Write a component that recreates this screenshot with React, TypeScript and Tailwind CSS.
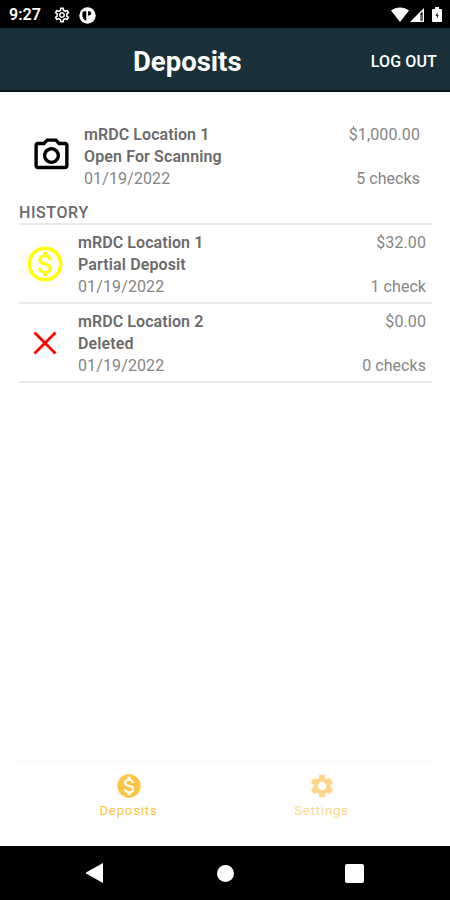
import { ReactNode } from 'react';
import { MdMonetizationOn, MdOutlineMonetizationOn, MdOutlinePhotoCamera, MdOutlineSettings, MdSettings } from 'react-icons/md';

type Deposit = {
  location: string;
  status: string;
  date: string;
  amount: string;
  checks: string;
};

const open: Deposit = {
  location: 'mRDC Location 1',
  status: 'Open For Scanning',
  date: '01/19/2022',
  amount: '$1,000.00',
  checks: '5 checks',
};

const partial: Deposit = {
  location: 'mRDC Location 1',
  status: 'Partial Deposit',
  date: '01/19/2022',
  amount: '$32.00',
  checks: '1 check',
};

const deleted: Deposit = {
  location: 'mRDC Location 2',
  status: 'Deleted',
  date: '01/19/2022',
  amount: '$0.00',
  checks: '0 checks',
};

function DepositRow({ deposit, icon }: { deposit: Deposit; icon: ReactNode }) {
  return (
    <div className="flex h-[66px] items-center text-[16px] leading-[22px] text-[#858585]">
      <div className="flex w-[52px] shrink-0 items-center justify-center pb-[2px]">{icon}</div>
      <div className="ml-[7px] flex-1 whitespace-nowrap">
        <p className="font-semibold tracking-[0.08px] text-[#6b6b6b]">{deposit.location}</p>
        <p className="font-semibold tracking-[0.12px] text-[#6b6b6b]">{deposit.status}</p>
        <p className="tracking-[0.12px]">{deposit.date}</p>
      </div>
      <div className="flex h-full flex-col justify-between text-right">
        <p className="tracking-[0.1px]">{deposit.amount}</p>
        <p className="tracking-[0.05px]">{deposit.checks}</p>
      </div>
    </div>
  );
}

function StatusBar() {
  return (
    <div className="flex h-7 items-center bg-black pl-[9px] pr-2 pt-[2px] text-white">
      <span className="w-[44px] text-[16px] font-semibold leading-none">9:27</span>
      <MdOutlineSettings className="h-[18px] w-[18px]" />
      <svg className="ml-2 h-[17px] w-[17px]" viewBox="0 0 17 17">
        <circle cx="8.5" cy="8.5" r="8.2" fill="#fff" />
        <path d="M3.4 5.5l1-1.3h2.9v9.6C4.8 13.2 3.4 11 3.4 8.5zM9 4.2h1.2a2 2 0 0 1 0 4.2H9z" fill="#000" />
      </svg>
      <svg className="ml-auto h-4 w-[18px]" viewBox="0 0 18 16" fill="#fff">
        <path d="M0 3.4C5.2-.6 12.8-.6 18 3.4L9 15z" />
      </svg>
      <svg className="ml-[1px] h-4 w-[15px]" viewBox="0 0 15 16">
        <path d="M0 15L14 1v14z" fill="#fff" />
        <path d="M10.5 6.5L12.6 4.4v9.4h-2.1z" fill="#000" />
        <path d="M11.1 8h.9v5h-.9z" fill="#777" />
      </svg>
      <svg className="ml-[7px] h-4 w-[10px]" viewBox="0 0 10 16">
        <path d="M3 0h4v2h2a1 1 0 0 1 1 1v11a1 1 0 0 1-1 1H1a1 1 0 0 1-1-1V3a1 1 0 0 1 1-1h2z" fill="#fff" />
        <path d="M5.4 5.2L3.6 8.8h1.3v3L6.5 8H5.4z" fill="#000" />
      </svg>
    </div>
  );
}

function Header() {
  return (
    <header className="flex h-[64px] items-center border-b-2 border-[#07161c] bg-[#1a3038] pl-[133px] pr-[13px] pt-[6px] text-white">
      <h1 className="pb-px text-[27.5px] font-bold leading-none">Deposits</h1>
      <span className="ml-auto whitespace-nowrap pb-px text-[16px] font-medium leading-none tracking-[0.15px]">LOG OUT</span>
    </header>
  );
}

export default function App() {
  return (
    <div className="flex h-[900px] w-[450px] flex-col overflow-hidden bg-white font-['Roboto',sans-serif]">
      <StatusBar />
      <Header />

      <main className="flex-1 pl-[19px] pr-[18px]">
        <div className="pl-[6px] pr-3 pt-8">
          <DepositRow deposit={open} icon={<MdOutlinePhotoCamera className="mb-[2px] h-[41px] w-[41px] text-black" />} />
        </div>
        <h2 className="mt-[12px] h-[21px] text-[16px] font-medium leading-[22px] tracking-[0.6px] text-[#6b6b6b]">HISTORY</h2>
        <div className="border-t-2 border-[#e9e9e9]">
          <div className="h-[79px] border-b-2 border-[#e9e9e9] pr-[6px] pt-[7px]">
            <DepositRow deposit={partial} icon={<MdOutlineMonetizationOn className="h-[42px] w-[42px] text-[#ffff00]" />} />
          </div>
          <div className="h-[79px] border-b-2 border-[#e9e9e9] pr-[6px] pt-[7px]">
            <DepositRow
              deposit={deleted}
              icon={
                <svg className="h-6 w-6" viewBox="0 0 24 24" fill="none" stroke="#ff0000" strokeWidth="2.8">
                  <path d="M1.5 1.5l21 21M22.5 1.5l-21 21" />
                </svg>
              }
            />
          </div>
        </div>
      </main>

      <nav className="mx-4 flex h-[85px] border-t border-[#f8f8f8] px-4 pt-[10px] text-[13px] leading-[16px]">
        <div className="flex flex-1 flex-col items-center text-[#ffc344]">
          <MdMonetizationOn className="h-7 w-7" />
          <span className="mt-[3px] tracking-[0.9px]">Deposits</span>
        </div>
        <div className="flex flex-1 flex-col items-center text-[#fcd78a]">
          <MdSettings className="h-7 w-7" />
          <span className="mt-[3px] tracking-[0.9px]">Settings</span>
        </div>
      </nav>

      <div className="flex h-[54px] items-center bg-black pl-[86px] text-white">
        <svg className="h-5 w-[17px]" viewBox="0 0 17 20" fill="currentColor">
          <path d="M17 0v20L0 10.5v-1z" />
        </svg>
        <div className="ml-[114px] h-[17px] w-[17px] rounded-full bg-white" />
        <div className="ml-[111px] h-[19px] w-[19px] rounded-[2px] bg-white" />
      </div>
    </div>
  );
}
